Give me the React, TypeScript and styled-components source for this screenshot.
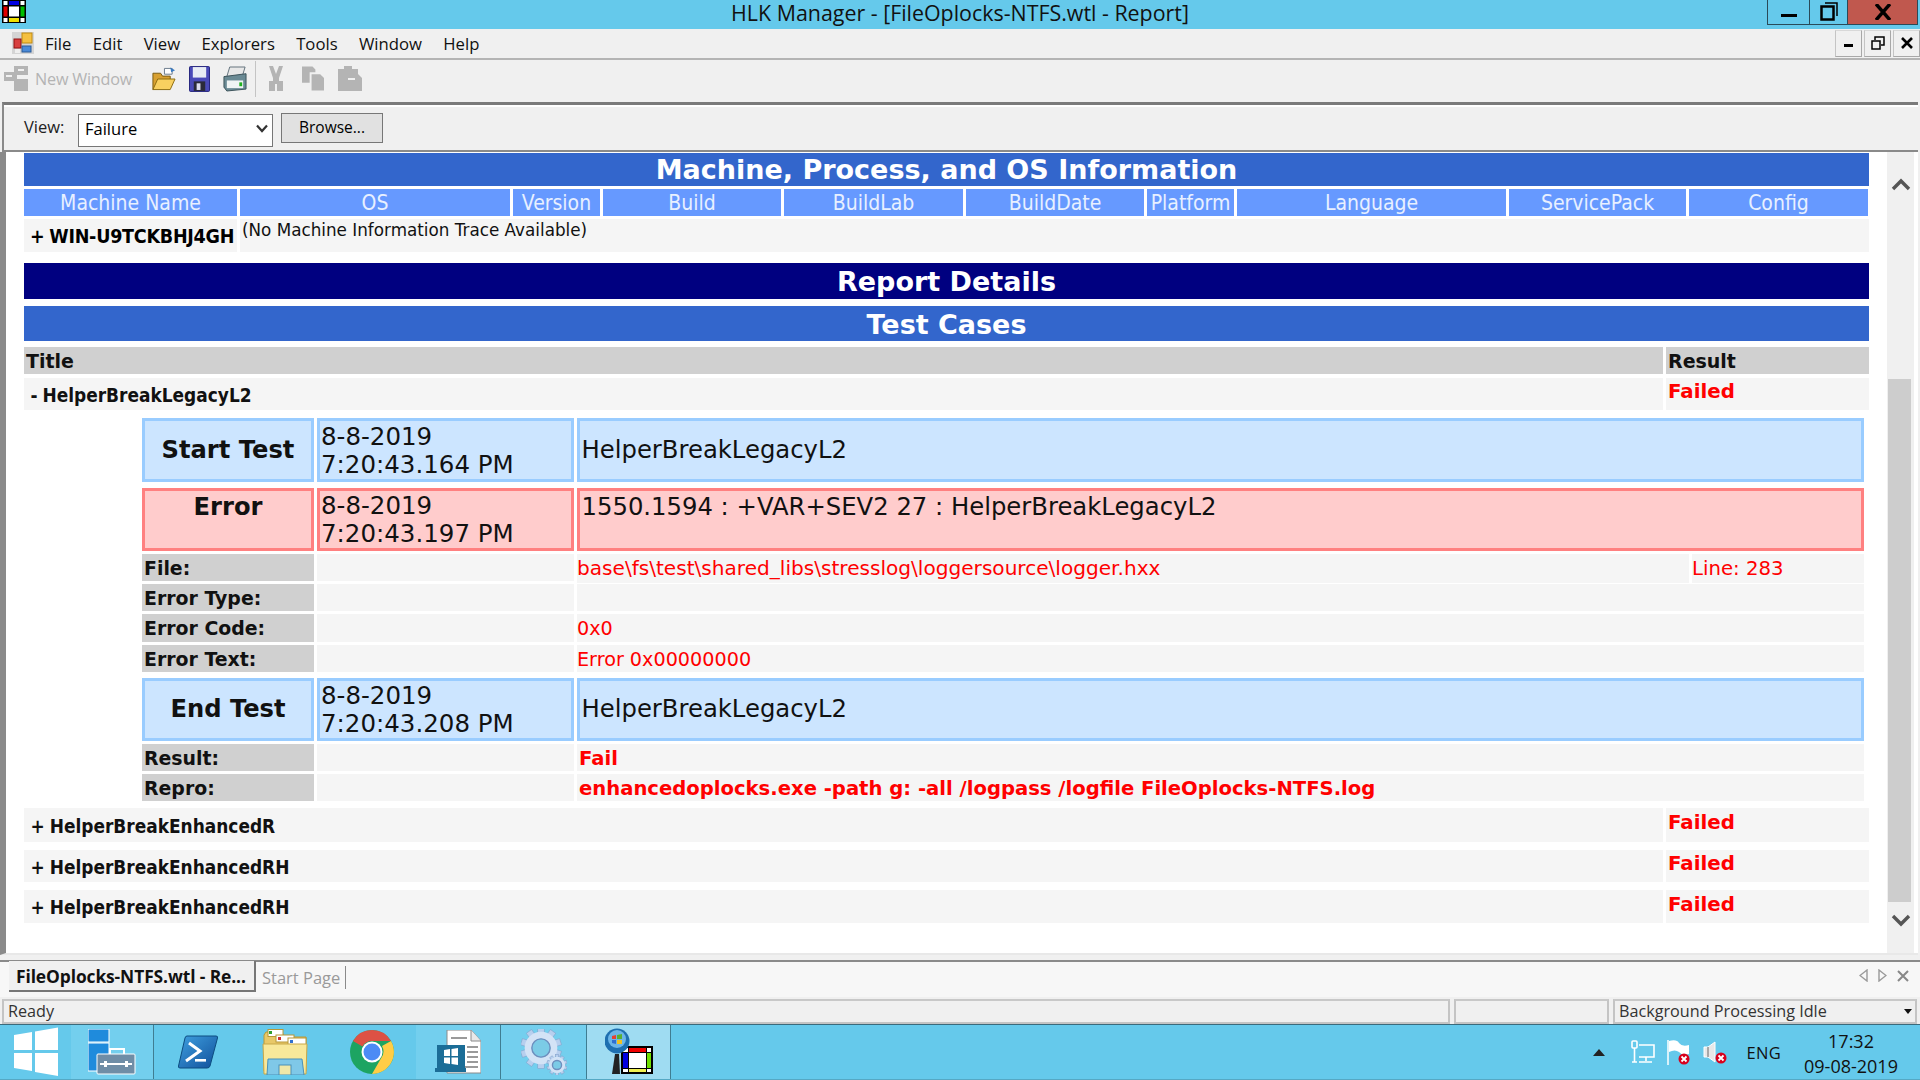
import React from "react";
import styled, { createGlobalStyle } from "styled-components";

const Global = createGlobalStyle`
  html, body { margin: 0; padding: 0; width: 1920px; height: 1080px; overflow: hidden; background: #f0f0f0; }
  #root { width: 1920px; height: 1080px; }
  * { box-sizing: border-box; }
`;

const UI = `"Open Sans", "Noto Sans", sans-serif`;
const VERDANA = `"DejaVu Sans", sans-serif`;
const TAHOMA = `"DejaVu Sans Condensed", "DejaVu Sans", sans-serif`;

const Root = styled.div`
  width: 1920px; height: 1080px; display: flex; flex-direction: column; font-family: ${UI}; color: #000; background: #f0f0f0;
`;
const TitleBar = styled.div`
  height: 29px; background: #65c9eb; display: grid; grid-template-columns: 1fr auto 1fr; align-items: start; padding-left: 2px; padding-right: 2px;
`;
const TitleText = styled.div`
  font-size: 21.4px; line-height: 25px; color: #111; white-space: nowrap;
`;
const WinControls = styled.div`
  justify-self: end; display: flex; height: 25px; border: 1px solid #2a4a58; border-top: none; border-right: none;
`;
const WinBtn = styled.div<{ $w: number; $close?: boolean }>`
  width: ${p => p.$w}px; height: 24px; background: ${p => (p.$close ? "#c0584e" : "transparent")};
  border-right: 1px solid #2a4a58; display: flex; align-items: center; justify-content: center;
`;
const MenuBar = styled.div`
  height: 31px; background: #f0f0f0; border-bottom: 2px solid #b4b4b4; display: flex; align-items: center; padding-left: 12px; position: relative;
`;
const Menus = styled.div`
  display: flex; margin-left: 11px; gap: 21.3px; font-size: 16.7px; color: #111;
`;
const MdiControls = styled.div`
  margin-left: auto; display: flex; gap: 2px; align-self: flex-start; padding-top: 1px;
`;
const MdiBtn = styled.div`
  width: 27px; height: 27px; border: 1px solid #a8a8a8; border-top-color: #d8d8d8; border-left-color: #c4c4c4; background: #f0f0f0; display: flex; align-items: center; justify-content: center;
`;
const Toolbar = styled.div`
  height: 42px; background: #f0f0f0; display: flex; align-items: center; padding-left: 4px; padding-bottom: 4px;
`;
const ToolText = styled.span`
  font-size: 16.2px; color: #b4b4b4; margin-left: 6px; margin-right: 20px; letter-spacing: -0.2px; width: 96px; white-space: nowrap;
`;
const ToolIcon = styled.div<{ $mr?: number }>`
  display: flex; margin-right: ${p => p.$mr ?? 13}px;
`;
const ToolSep = styled.div`
  width: 1px; height: 36px; background: #c4c4c4; margin-right: 12px;
`;
const ViewBar = styled.div`
  height: 50px; background: #f0f0f0; border-top: 3px solid #7a7a7a; border-bottom: 2px solid #8a8a8a; box-shadow: inset 0 2px 0 #fff; margin-left: 2px; margin-right: 2px; border-left: 2px solid #8a8a8a;
  display: flex; align-items: flex-start; padding-left: 20px; padding-top: 8px;
`;
const ViewLabel = styled.span`
  font-size: 16.5px; color: #222; line-height: 28px; width: 54px;
`;
const Select = styled.div`
  width: 195px; height: 33px; background: #fff; border: 1.5px solid #777; display: flex; align-items: center; justify-content: space-between; padding: 0 4px 3px 6px; font-size: 16.5px; margin-top: 1px;
`;
const BrowseBtn = styled.div`
  width: 102px; height: 30px; margin-left: 8px; background: #e1e1e1; border: 1.5px solid #777; display: flex; align-items: center; justify-content: center; font-size: 15.5px; padding-bottom: 1px;
`;
const Body = styled.div`
  height: 804px; display: flex; background: #fff; border-left: 6px solid #8a8a8a; margin-right: 2px; border-bottom: 2px solid #e8e8e8;
`;
const Pane = styled.div`
  width: 1881px; padding-left: 18px; padding-top: 1px; background: #fff; overflow: hidden;
`;
const Report = styled.div`
  width: 1845px; display: flex; flex-direction: column;
`;
const Banner = styled.div<{ $bg: string; $h: number; $mt: number; $lh?: number }>`
  background: ${p => p.$bg}; height: ${p => p.$h}px; margin-top: ${p => p.$mt}px; font: bold 27px/${p => p.$lh ?? p.$h + 1}px ${VERDANA}; color: #fff; text-align: center;
`;
const MachineCols = styled.div`
  margin-top: 3px; display: grid; gap: 3px; grid-template-columns: 213px 270px 87px 178px 179px 178px 87px 269px 177px 179px; grid-template-rows: 27px;
`;
const MachineCol = styled.div`
  background: #6699ff; color: #e8f0ff; font: 21px/28px ${TAHOMA}; text-align: center; white-space: nowrap; overflow: hidden;
`;
const MachineRow = styled.div`
  margin-top: 3px; display: grid; grid-template-columns: 213px 1fr; grid-template-rows: 33px; gap: 3px;
`;
const GreyCell = styled.div`
  background: #f5f5f5; min-width: 0;
`;
const MachineName = styled(GreyCell)`
  font: bold 19.5px/36px ${TAHOMA}; padding-left: 6px; white-space: nowrap; letter-spacing: -0.25px; word-spacing: -1px;
`;
const MachineNote = styled(GreyCell)`
  font: 16.8px/22px ${VERDANA}; padding-left: 2px; color: #111; white-space: nowrap;
`;
const TitleRow = styled.div<{ $mt: number }>`
  margin-top: ${p => p.$mt}px; display: grid; grid-template-columns: 1fr 203px; gap: 3px;
`;
const HeadCell = styled.div`
  background: #d0d0d0; height: 27px; font: bold 19px/29px ${VERDANA}; padding-left: 2px; color: #111;
`;
const CaseName = styled(GreyCell)<{ $h: number }>`
  height: ${p => p.$h}px; font: bold 18.9px/${p => p.$h + 2}px ${TAHOMA}; padding-left: 6.5px; color: #111; word-spacing: -1px;
`;
const CaseResult = styled(GreyCell)<{ $h: number }>`
  height: ${p => p.$h}px; font: bold 19.8px/${p => p.$h - 4}px ${VERDANA}; padding-left: 2px; color: #ff0000;
`;
const Detail = styled.div`
  margin-left: 118px; width: 1722px; display: flex; flex-direction: column;
`;
const EventRow = styled.div<{ $mt: number; $h?: number }>`
  margin-top: ${p => p.$mt}px; display: grid; gap: 3px; grid-template-columns: 172px 257px 1fr; grid-template-rows: minmax(0, 1fr); height: ${p => p.$h ?? 63}px;
`;
const EventCell = styled.div<{ $err?: boolean }>`
  background: ${p => (p.$err ? "#ffcccc" : "#cce5ff")}; border: 3px solid ${p => (p.$err ? "#ff8080" : "#99ccff")};
  color: #111; display: flex; min-width: 0;
`;
const EventName = styled(EventCell)<{ $top?: boolean }>`
  font: bold 24.2px/30px ${VERDANA}; justify-content: center; align-items: ${p => (p.$top ? "flex-start" : "center")}; padding-top: ${p => (p.$top ? "1px" : "0")};
`;
const EventDate = styled(EventCell)`
  font: 24.5px/28px ${VERDANA}; padding: 2px 1px 0; align-items: center; white-space: pre;
`;
const EventMsg = styled(EventCell)<{ $top?: boolean }>`
  font: 24.3px/30px ${VERDANA}; padding-left: 1.5px; align-items: ${p => (p.$top ? "flex-start" : "center")}; white-space: nowrap; padding-top: ${p => (p.$top ? "1px" : "0")};
`;
const FieldRow = styled.div<{ $mt?: number; $h?: number }>`
  margin-top: ${p => p.$mt ?? 3}px; display: grid; gap: 3px; grid-template-columns: 172px 257px 1fr; grid-template-rows: minmax(0, 1fr); height: ${p => p.$h ?? 27}px;
`;
const FieldLabel = styled.div`
  background: #d0d0d0; font: bold 18.9px/28px ${VERDANA}; padding-left: 2px; color: #111; white-space: nowrap;
`;
const FieldValue = styled(GreyCell)<{ $bold?: boolean; $fs?: number }>`
  font: ${p => (p.$bold ? "bold" : "normal")} ${p => p.$fs ?? 19.2}px/29px ${VERDANA}; color: #ff0000; white-space: nowrap; padding-left: ${p => (p.$bold ? 2 : 0)}px;
`;
const FileValue = styled.div`
  display: grid; grid-template-columns: 1112px 1fr; gap: 3px;
`;
const ScrollBar = styled.div`
  width: 27px; background: #f0f0f0; margin-right: 3px; display: flex; flex-direction: column; align-items: center; padding-top: 25px;
`;
const Thumb = styled.div`
  width: 23px; height: 523px; background: #cdcdcd; margin-top: 188px; margin-right: 2px;
`;
const ArrowBox = styled.div`
  display: flex; margin-top: 12px;
`;
const TabBar = styled.div`
  height: 38px; margin-top: 5px; background: #f7f7f7; border-top: 2px solid #8a8a8a; display: flex; align-items: flex-start; padding-left: 9px; border-bottom: 1px solid #f0f0f0; box-shadow: 0 -1px 0 #f0f0f0;
`;
const ActiveTab = styled.div`
  width: 247px; height: 31px; background: #f0f0f0; border-right: 2px solid #777; border-bottom: 2px solid #777; margin-top: -1px; font: bold 17.4px/31px ${UI}; color: #111; padding-left: 7px; white-space: nowrap; letter-spacing: -0.1px;
`;
const IdleTab = styled.div`
  margin-left: 6px; margin-top: 4px; height: 23px; padding-right: 5px; border-right: 1px solid #8a8a8a; font-size: 16.5px; line-height: 23px; color: #9a9a9a;
`;
const TabNav = styled.div`
  margin-left: auto; display: flex; gap: 10px; align-items: center; margin-top: 7px; margin-right: 11px;
`;
const StatusBar = styled.div`
  height: 26px; padding: 1px 3px 0 2px; display: flex; gap: 4px; background: #f0f0f0; border-bottom: 1px solid #f0f0f0;
`;
const StatusCell = styled.div<{ $w?: number }>`
  height: 25px; width: ${p => (p.$w ? `${p.$w}px` : "auto")}; flex: ${p => (p.$w ? "none" : "1")}; border: 2px solid #c4c4c4; border-top-color: #c8c8c8; font-size: 16.2px; line-height: 21px; padding-left: 4px; color: #333; display: flex; justify-content: space-between; align-items: center;
`;
const TaskBar = styled.div`
  height: 56px; background: #65c9eb; border-top: 1px solid #3a6a7c; border-bottom: 1px solid #55a8c4; display: flex; align-items: center; color: #111;
`;
const TaskBtn = styled.div<{ $w: number; $on?: 0 | 1 | 2 }>`
  width: ${p => p.$w}px; height: 100%; display: flex; align-items: center; justify-content: center;
  background: ${p => (p.$on === 2 ? "#9fdcf2" : p.$on === 1 ? "#73cfee" : "transparent")};
  border-right: ${p => (p.$on ? "1px solid #3f7d92" : "none")};
`;
const Tray = styled.div`
  margin-left: auto; display: flex; align-items: center; height: 100%;
`;
const TrayIcons = styled.div`
  display: flex; align-items: center; gap: 12px; margin-right: 20px;
`;
const Lang = styled.span`
  font-size: 16.5px; margin-right: 6px; letter-spacing: 0.3px;
`;
const Clock = styled.div`
  width: 128px; margin-right: 5px; text-align: center; font-size: 18px; line-height: 25px; padding-top: 3px;
`;

const HlkLogo = ({ s = 24 }: { s?: number }) => (
  <svg width={s} height={s - 1} viewBox="0 0 24 23">
    <rect x="0" y="0" width="24" height="23" fill="#000" />
    <rect x="1.5" y="1" width="4" height="4" fill="#fff" />
    <rect x="18.5" y="1" width="4" height="4" fill="#fff" />
    <rect x="1.5" y="18" width="4" height="4" fill="#fff" />
    <rect x="18.5" y="18" width="4" height="4" fill="#fff" />
    <rect x="7" y="1" width="10" height="4" fill="#0000e0" />
    <rect x="1.5" y="6.5" width="4" height="10" fill="#e00000" />
    <rect x="18.5" y="6.5" width="4" height="10" fill="#00c000" />
    <rect x="7" y="18" width="10" height="4" fill="#f0e000" />
    <rect x="7" y="6.5" width="10" height="10" fill="#fff" />
  </svg>
);

const MenuIcon = () => (
  <svg width="22" height="24" viewBox="0 0 22 24">
    <rect x="0" y="1" width="22" height="22" fill="#d4d4d4" />
    <rect x="10" y="2" width="10" height="10" fill="#f5c040" stroke="#c08a10" />
    <rect x="2" y="8" width="7" height="9" fill="#d84040" stroke="#901010" />
    <rect x="10" y="15" width="9" height="6" fill="#4a8ad8" stroke="#2a5a98" />
    <rect x="3" y="18" width="5" height="4" fill="#eee" />
  </svg>
);

const GreyNewWindow = () => (
  <svg width="25" height="26" viewBox="0 0 25 26" fill="#b4b4b4">
    <rect x="10" y="0" width="14" height="9" />
    <rect x="0" y="6" width="13" height="9" />
    <rect x="10" y="13" width="14" height="12" />
    <rect x="2" y="9" width="6" height="2" fill="#f0f0f0" />
    <rect x="14" y="3" width="6" height="2" fill="#f0f0f0" />
  </svg>
);
const FolderIcon = () => (
  <svg width="25" height="26" viewBox="0 0 26 26">
    <path d="M14 2 L22 2 L22 8 L14 8Z" fill="#fff" stroke="#6a7a8a" />
    <path d="M20 1 L25 4 L21 6Z" fill="#3a7ac0" />
    <path d="M2 7 L10 7 L12 10 L20 10 L20 14 L2 24Z" fill="#d8a030" stroke="#7a5a10" />
    <path d="M2 24 L7 13 L25 13 L20 24Z" fill="#f8d060" stroke="#8a6a10" />
  </svg>
);
const SaveIcon = () => (
  <svg width="21" height="26" viewBox="0 0 22 27">
    <rect x="0.5" y="0.5" width="21" height="26" rx="1" fill="#4a4ab8" stroke="#20207a" />
    <rect x="4" y="1" width="14" height="11" fill="#e8ecf4" />
    <rect x="5" y="16" width="12" height="10" fill="#2a2a3a" />
    <rect x="8" y="18" width="4" height="7" fill="#dde" />
  </svg>
);
const PrintIcon = () => (
  <svg width="24" height="26" viewBox="0 0 25 27">
    <path d="M7 1 L23 1 L20 11 L4 11Z" fill="#e8e8e8" stroke="#60707a" />
    <path d="M1 11 L24 8 L24 24 L4 26 L1 22Z" fill="#6a8a94" stroke="#3a5058" />
    <rect x="4" y="15" width="17" height="8" fill="#f0f4f4" />
    <rect x="17" y="17" width="3" height="4" fill="#20b020" />
  </svg>
);
const GreyCut = () => (
  <svg width="16" height="26" viewBox="0 0 16 26" fill="#b4b4b4">
    <path d="M1 0 L5 0 L8 8 L11 0 L15 0 L11 12 L11 15 L15 15 L15 25 L9 25 L9 18 L7 18 L7 25 L1 25 L1 15 L5 15 L5 12Z" />
  </svg>
);
const GreyCopy = () => (
  <svg width="22" height="25" viewBox="0 0 23 25" fill="#b4b4b4">
    <path d="M0 0 L11 0 L14 3 L14 6 L8 6 L8 17 L0 17Z" />
    <path d="M10 8 L19 8 L23 12 L23 25 L10 25Z" />
  </svg>
);
const GreyPaste = () => (
  <svg width="24" height="25" viewBox="0 0 24 25" fill="#b4b4b4">
    <path d="M0 3 L6 3 L6 0 L14 0 L14 3 L20 3 L20 8 L24 12 L24 25 L0 25Z" />
    <rect x="10" y="12" width="7" height="2" fill="#f0f0f0" />
  </svg>
);

const WinStart = () => (
  <svg width="44" height="50" viewBox="0 0 44 50" fill="#fff">
    <path d="M0 8 L18 5 L18 23 L0 23Z" />
    <path d="M21 4.5 L44 0.5 L44 23 L21 23Z" />
    <path d="M0 26 L18 26 L18 44 L0 41Z" />
    <path d="M21 26 L44 26 L44 49 L21 45Z" />
  </svg>
);
const ServerIcon = () => (
  <svg width="48" height="46" viewBox="0 0 48 46">
    <rect x="0" y="0" width="21" height="13" fill="#1f8bdc" stroke="#fff" />
    <rect x="0" y="14" width="21" height="28" fill="#1f8bdc" stroke="#fff" />
    <rect x="22" y="20" width="14" height="10" fill="none" stroke="#fff" strokeWidth="2" />
    <rect x="9" y="25" width="38" height="20" rx="1" fill="#6f8da6" stroke="#fff" />
    <rect x="12" y="34" width="32" height="2" fill="#fff" />
    <rect x="16" y="32" width="3" height="6" fill="#fff" />
    <rect x="37" y="32" width="3" height="6" fill="#fff" />
  </svg>
);
const PsIcon = () => (
  <svg width="40" height="34" viewBox="0 0 40 34">
    <defs>
      <linearGradient id="ps" x1="0" y1="0" x2="1" y2="1">
        <stop offset="0" stopColor="#3fa0e0" />
        <stop offset="1" stopColor="#104f9a" />
      </linearGradient>
    </defs>
    <path d="M9 1 L38 1 Q40 1 39.5 3 L32 31 Q31.5 33 29 33 L2 33 Q0 33 0.5 31 L7 3 Q7.5 1 9 1Z" fill="url(#ps)" stroke="#0d4c80" />
    <path d="M11 8 L22 16 L8 26" fill="none" stroke="#fff" strokeWidth="3" />
    <rect x="17" y="24" width="11" height="2.6" fill="#fff" />
  </svg>
);
const ExplorerIcon = () => (
  <svg width="46" height="46" viewBox="0 0 46 46">
    <path d="M2 6 L2 42 L44 42 L44 8 L22 8 L20 3 L4 3Z" fill="#e8c868" stroke="#b89838" />
    <rect x="6" y="0.5" width="15" height="7" fill="#fff" stroke="#b89838" />
    <rect x="7" y="2" width="3" height="3" fill="#30a030" />
    <rect x="14" y="6" width="18" height="7" fill="#fff" stroke="#b89838" />
    <rect x="16" y="8" width="3" height="3" fill="#d03030" />
    <rect x="26" y="9" width="18" height="7" fill="#fff" stroke="#b89838" />
    <rect x="28" y="11" width="3" height="3" fill="#3070d0" />
    <path d="M1 15 L45 15 L44 45 L2 45Z" fill="#f8e89a" stroke="#c8a848" />
    <path d="M6 30 L40 30 L42 46 L5 46Z" fill="#7fc8e8" stroke="#4a90b8" />
    <rect x="17" y="36" width="12" height="10" fill="#f0e8a8" stroke="#4a90b8" />
  </svg>
);
const ChromeIcon = () => (
  <svg width="44" height="44" viewBox="0 0 44 44">
    <circle cx="22" cy="22" r="22" fill="#1da462" />
    <path d="M22 0 A22 22 0 0 1 41 11 L22 11 A11 11 0 0 0 12.5 16.5 L3 11 A22 22 0 0 1 22 0Z" fill="#dd5144" />
    <path d="M41 11 A22 22 0 0 1 22 44 L31.5 27.5 A11 11 0 0 0 32 16 Z" fill="#ffcd46" />
    <circle cx="22" cy="22" r="10.5" fill="#fff" />
    <circle cx="22" cy="22" r="8.5" fill="#4c8bf5" />
  </svg>
);
const DocIcon = () => (
  <svg width="46" height="44" viewBox="0 0 46 44">
    <path d="M12 0 L36 0 L46 11 L46 43 L12 43Z" fill="#fff" stroke="#8a8a8a" />
    <path d="M36 0 L36 11 L46 11" fill="#e8e8e8" stroke="#8a8a8a" />
    <g fill="#9a9a9a"><rect x="16" y="7" width="16" height="2" /><rect x="32" y="16" width="11" height="2" /><rect x="32" y="21" width="11" height="2" /><rect x="32" y="26" width="11" height="2" /><rect x="32" y="31" width="11" height="2" /><rect x="16" y="36" width="27" height="2" /></g>
    <rect x="2" y="15" width="28" height="24" fill="#1b6d97" />
    <path d="M9 20 L15 19 L15 26 L9 26Z M16.5 19 L23 18 L23 26 L16.5 26Z M9 27.5 L15 27.5 L15 34 L9 33Z M16.5 27.5 L23 27.5 L23 35 L16.5 34Z" fill="#fff" />
    <rect x="0" y="38" width="31" height="4" fill="#1b6d97" />
  </svg>
);
const Gear = ({ cx, cy, r }: { cx: number; cy: number; r: number }) => (
  <g>
    {Array.from({ length: 10 }).map((_, i) => (
      <rect key={i} x={cx - r * 0.17} y={cy - r * 1.08} width={r * 0.34} height={r * 0.5} fill="#b7cfee" stroke="#7d9cc6" strokeWidth="0.5" transform={`rotate(${i * 36} ${cx} ${cy})`} />
    ))}
    <circle cx={cx} cy={cy} r={r * 0.68} fill="none" stroke="#d3e3f6" strokeWidth={r * 0.36} />
    <circle cx={cx} cy={cy} r={r * 0.48} fill="#7bcbe6" stroke="#6e8fbe" strokeWidth={1.4} />
  </g>
);
const GearsIcon = () => (
  <svg width="46" height="46" viewBox="0 0 46 46">
    <Gear cx={20} cy={19} r={19} />
    <Gear cx={36} cy={36} r={9.5} />
  </svg>
);
const HlkTaskIcon = () => (
  <svg width="48" height="48" viewBox="0 0 48 48">
    <rect x="16" y="18" width="32" height="28" fill="#000" />
    <rect x="18" y="20" width="5" height="4" fill="#fff" />
    <rect x="24" y="20" width="17" height="4" fill="#f00000" />
    <rect x="42" y="20" width="4" height="4" fill="#fff" />
    <rect x="18" y="25" width="5" height="15" fill="#0000e0" />
    <rect x="24" y="25" width="17" height="15" fill="#fff" />
    <rect x="42" y="25" width="4" height="15" fill="#70e000" />
    <rect x="18" y="41" width="5" height="3" fill="#fff" />
    <rect x="24" y="41" width="17" height="3" fill="#f0f050" />
    <rect x="42" y="41" width="4" height="3" fill="#fff" />
    <circle cx="12" cy="13" r="12.5" fill="#1d6fb0" />
    <circle cx="12" cy="11" r="9" fill="#6bb5e8" />
    <path d="M7 8 L11 7 L11 11 L7 11Z" fill="#e84030" />
    <path d="M12 7 L17 6 L17 11 L12 11Z" fill="#58b030" />
    <path d="M7 12 L11 12 L11 16 L7 15Z" fill="#3070d0" />
    <path d="M12 12 L17 12 L17 16 L12 16Z" fill="#f0c020" />
    <path d="M10 26 L14 26 L15 46 L7 46Z" fill="#222" />
  </svg>
);
const ErrBadge = ({ x, y }: { x: number; y: number }) => (
  <g>
    <circle cx={x} cy={y} r={5.5} fill="#d8001c" />
    <path d={`M${x - 2.5} ${y - 2.5} L${x + 2.5} ${y + 2.5} M${x + 2.5} ${y - 2.5} L${x - 2.5} ${y + 2.5}`} stroke="#fff" strokeWidth="1.8" />
  </g>
);
const NetTray = () => (
  <svg width="24" height="24" viewBox="0 0 24 24" fill="none" stroke="#fff" strokeWidth="1.6">
    <rect x="1" y="1" width="5" height="7" rx="1" />
    <path d="M3.5 8 L3.5 22 M8 5 L23 5 L23 17 L8 17 M15 17 L15 21 M8 22 L21 22 M1 22 L6 22" />
  </svg>
);
const FlagTray = () => (
  <svg width="24" height="25" viewBox="0 0 24 25">
    <path d="M1 0 L1 25" stroke="#fff" strokeWidth="1.5" />
    <path d="M2 1 Q10 -1 12 3 Q15 7 22 5 L22 14 Q15 16 12 12 Q8 9 2 12Z" fill="#fff" />
    <ErrBadge x={17} y={19} />
  </svg>
);
const SpeakerTray = () => (
  <svg width="24" height="23" viewBox="0 0 24 23">
    <path d="M1 6 L5 6 L12 1 L12 21 L5 16 L1 16Z" fill="#e8e8e8" stroke="#fff" />
    <path d="M5 6 L5 16" stroke="#666" />
    <ErrBadge x={18} y={17} />
  </svg>
);

const cols = ["Machine Name", "OS", "Version", "Build", "BuildLab", "BuildDate", "Platform", "Language", "ServicePack", "Config"];

export default function App() {
  return (
    <Root>
      <Global />
      <TitleBar>
        <HlkLogo />
        <TitleText>HLK Manager - [FileOplocks-NTFS.wtl - Report]</TitleText>
        <WinControls>
          <WinBtn $w={42}>
            <svg width="16" height="12" viewBox="0 0 16 12"><rect x="0" y="8" width="16" height="3" fill="#000" /></svg>
          </WinBtn>
          <WinBtn $w={38}>
            <svg width="18" height="22" viewBox="0 0 18 22" fill="none" stroke="#000" strokeWidth="2.5"><rect x="1.5" y="5.5" width="12" height="13" /><path d="M5 2 L17 2 L17 15" strokeWidth="1.5" /></svg>
          </WinBtn>
          <WinBtn $close $w={70}>
            <svg width="16" height="16" viewBox="0 0 16 16" stroke="#000" strokeWidth="3.5"><path d="M1 0 L15 16 M15 0 L1 16" /></svg>
          </WinBtn>
        </WinControls>
      </TitleBar>
      <MenuBar>
        <MenuIcon />
        <Menus>
          {["File", "Edit", "View", "Explorers", "Tools", "Window", "Help"].map(m => (
            <span key={m}>{m}</span>
          ))}
        </Menus>
        <MdiControls>
          <MdiBtn><svg width="10" height="10" viewBox="0 0 10 10"><rect x="0" y="6" width="9" height="3" fill="#000" /></svg></MdiBtn>
          <MdiBtn><svg width="14" height="14" viewBox="0 0 14 14" fill="none" stroke="#000" strokeWidth="1.5"><rect x="1" y="5" width="8" height="8" /><path d="M4 4 L4 1 L13 1 L13 9 L10 9" /></svg></MdiBtn>
          <MdiBtn><svg width="12" height="12" viewBox="0 0 12 12" stroke="#000" strokeWidth="2.6"><path d="M1 1 L11 11 M11 1 L1 11" /></svg></MdiBtn>
        </MdiControls>
      </MenuBar>
      <Toolbar>
        <GreyNewWindow />
        <ToolText>New Window</ToolText>
        <ToolIcon><FolderIcon /></ToolIcon>
        <ToolIcon><SaveIcon /></ToolIcon>
        <ToolIcon $mr={8}><PrintIcon /></ToolIcon>
        <ToolSep />
        <ToolIcon $mr={18}><GreyCut /></ToolIcon>
        <ToolIcon $mr={14}><GreyCopy /></ToolIcon>
        <ToolIcon><GreyPaste /></ToolIcon>
      </Toolbar>
      <ViewBar>
        <ViewLabel>View:</ViewLabel>
        <Select>
          <span>Failure</span>
          <svg width="12" height="9" viewBox="0 0 12 9" fill="none" stroke="#333" strokeWidth="2.2"><path d="M1 1.5 L6 7 L11 1.5" /></svg>
        </Select>
        <BrowseBtn>Browse...</BrowseBtn>
      </ViewBar>
      <Body>
        <Pane>
          <Report>
            <Banner $bg="#3366cc" $h={33} $mt={0}>Machine, Process, and OS Information</Banner>
            <MachineCols>
              {cols.map(c => (
                <MachineCol key={c}>{c}</MachineCol>
              ))}
            </MachineCols>
            <MachineRow>
              <MachineName>+ WIN-U9TCKBHJ4GH</MachineName>
              <MachineNote>(No Machine Information Trace Available)</MachineNote>
            </MachineRow>
            <Banner $bg="#000080" $h={36} $mt={11}>Report Details</Banner>
            <Banner $bg="#3366cc" $h={35} $mt={7} $lh={38}>Test Cases</Banner>
            <TitleRow $mt={6}>
              <HeadCell>Title</HeadCell>
              <HeadCell>Result</HeadCell>
            </TitleRow>
            <TitleRow $mt={4}>
              <CaseName $h={32}>- HelperBreakLegacyL2</CaseName>
              <CaseResult $h={32}>Failed</CaseResult>
            </TitleRow>
            <Detail>
              <EventRow $mt={8} $h={64}>
                <EventName>Start Test</EventName>
                <EventDate>{"8-8-2019\n7:20:43.164 PM"}</EventDate>
                <EventMsg>HelperBreakLegacyL2</EventMsg>
              </EventRow>
              <EventRow $mt={6}>
                <EventName $err $top>Error</EventName>
                <EventDate $err>{"8-8-2019\n7:20:43.197 PM"}</EventDate>
                <EventMsg $err $top>1550.1594 : +VAR+SEV2 27 : HelperBreakLegacyL2</EventMsg>
              </EventRow>
              <FieldRow>
                <FieldLabel>File:</FieldLabel>
                <GreyCell />
                <FileValue>
                  <FieldValue $fs={20.1}>base\fs\test\shared_libs\stresslog\loggersource\logger.hxx</FieldValue>
                  <FieldValue $fs={19.7}>Line: 283</FieldValue>
                </FileValue>
              </FieldRow>
              <FieldRow>
                <FieldLabel>Error Type:</FieldLabel>
                <GreyCell />
                <GreyCell />
              </FieldRow>
              <FieldRow $h={28}>
                <FieldLabel>Error Code:</FieldLabel>
                <GreyCell />
                <FieldValue>0x0</FieldValue>
              </FieldRow>
              <FieldRow>
                <FieldLabel>Error Text:</FieldLabel>
                <GreyCell />
                <FieldValue>Error 0x00000000</FieldValue>
              </FieldRow>
              <EventRow $mt={6}>
                <EventName>End Test</EventName>
                <EventDate>{"8-8-2019\n7:20:43.208 PM"}</EventDate>
                <EventMsg>HelperBreakLegacyL2</EventMsg>
              </EventRow>
              <FieldRow>
                <FieldLabel>Result:</FieldLabel>
                <GreyCell />
                <FieldValue $bold $fs={19.6}>Fail</FieldValue>
              </FieldRow>
              <FieldRow>
                <FieldLabel>Repro:</FieldLabel>
                <GreyCell />
                <FieldValue $bold $fs={19.6}>enhancedoplocks.exe -path g: -all /logpass /logfile FileOplocks-NTFS.log</FieldValue>
              </FieldRow>
            </Detail>
            <TitleRow $mt={7}>
              <CaseName $h={34}>+ HelperBreakEnhancedR</CaseName>
              <CaseResult $h={34}>Failed</CaseResult>
            </TitleRow>
            <TitleRow $mt={8}>
              <CaseName $h={32}>+ HelperBreakEnhancedRH</CaseName>
              <CaseResult $h={32}>Failed</CaseResult>
            </TitleRow>
            <TitleRow $mt={8}>
              <CaseName $h={33}>+ HelperBreakEnhancedRH</CaseName>
              <CaseResult $h={33}>Failed</CaseResult>
            </TitleRow>
          </Report>
        </Pane>
        <ScrollBar>
          <svg width="20" height="14" viewBox="0 0 20 14" fill="none" stroke="#555" strokeWidth="3.4"><path d="M2 12 L10 4 L18 12" /></svg>
          <Thumb />
          <ArrowBox>
            <svg width="20" height="14" viewBox="0 0 20 14" fill="none" stroke="#555" strokeWidth="3.4"><path d="M2 2 L10 10 L18 2" /></svg>
          </ArrowBox>
        </ScrollBar>
      </Body>
      <TabBar>
        <ActiveTab>FileOplocks-NTFS.wtl - Re...</ActiveTab>
        <IdleTab>Start Page</IdleTab>
        <TabNav>
          <svg width="9" height="13" viewBox="0 0 9 13" fill="none" stroke="#999" strokeWidth="1.4"><path d="M8 1 L1 6.5 L8 12Z" /></svg>
          <svg width="9" height="13" viewBox="0 0 9 13" fill="none" stroke="#999" strokeWidth="1.4"><path d="M1 1 L8 6.5 L1 12Z" /></svg>
          <svg width="12" height="12" viewBox="0 0 12 12" stroke="#888" strokeWidth="2"><path d="M1 1 L11 11 M11 1 L1 11" /></svg>
        </TabNav>
      </TabBar>
      <StatusBar>
        <StatusCell>Ready</StatusCell>
        <StatusCell $w={155} />
        <StatusCell $w={304}>
          Background Processing Idle
          <svg width="10" height="6" viewBox="0 0 10 6" style={{ marginRight: 2 }}><path d="M1 0 L9 0 L5 5Z" fill="#111" /></svg>
        </StatusCell>
      </StatusBar>
      <TaskBar>
        <TaskBtn $w={71}><WinStart /></TaskBtn>
        <TaskBtn $w={83} $on={1}><ServerIcon /></TaskBtn>
        <TaskBtn $w={88}><PsIcon /></TaskBtn>
        <TaskBtn $w={86}><ExplorerIcon /></TaskBtn>
        <TaskBtn $w={88}><ChromeIcon /></TaskBtn>
        <TaskBtn $w={85} $on={1}><DocIcon /></TaskBtn>
        <TaskBtn $w={86} $on={1}><GearsIcon /></TaskBtn>
        <TaskBtn $w={84} $on={2}><HlkTaskIcon /></TaskBtn>
        <Tray>
          <TrayIcons>
            <svg width="12" height="7" viewBox="0 0 12 7" style={{ marginRight: 14 }}><path d="M0 7 L6 0 L12 7Z" fill="#222" /></svg>
            <NetTray />
            <FlagTray />
            <SpeakerTray />
          </TrayIcons>
          <Lang>ENG</Lang>
          <Clock>17:32<br />09-08-2019</Clock>
        </Tray>
      </TaskBar>
    </Root>
  );
}
